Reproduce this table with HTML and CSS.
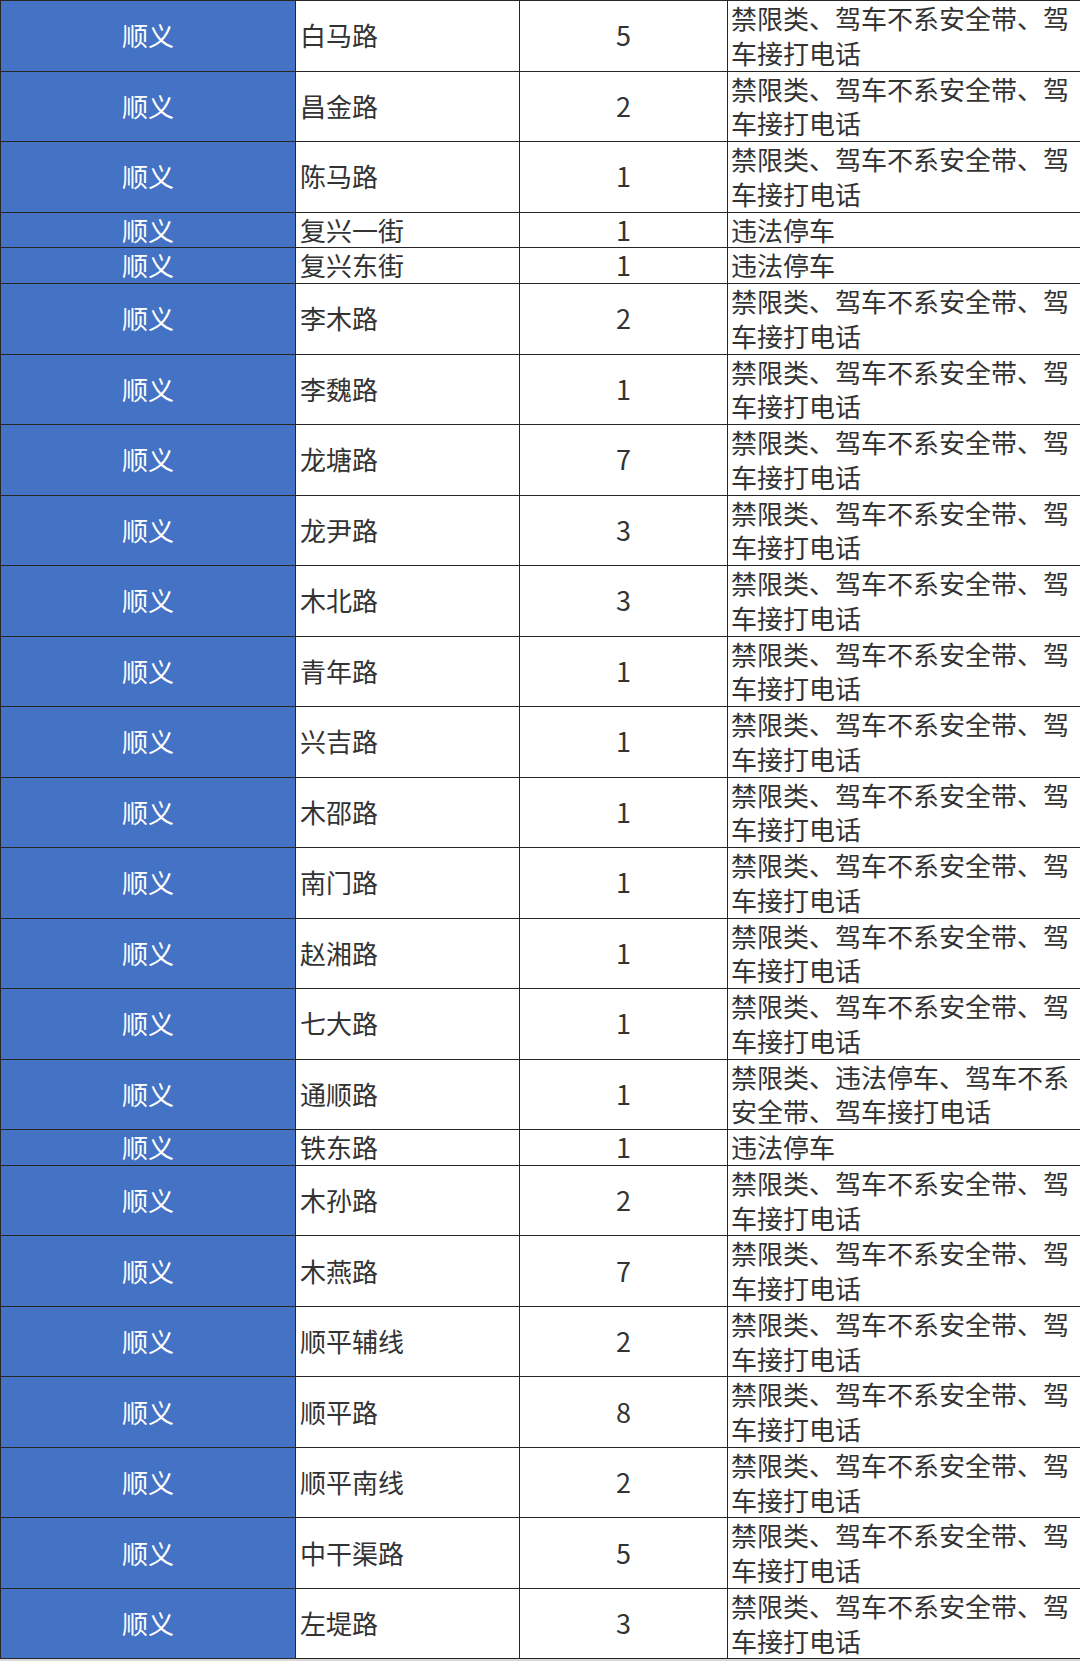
FILE: index.html
```html
<!DOCTYPE html>
<html lang="zh-CN">
<head>
<meta charset="utf-8">
<title>顺义 违法统计</title>
<link rel="stylesheet" href="styles.css">
</head>
<body>
<table class="sheet">
<colgroup>
<col class="c-area"><col class="c-road"><col class="c-num"><col class="c-type">
</colgroup>
<tbody>
<tr><td class="area">顺义</td><td class="road">白马路</td><td class="num">5</td><td class="type">禁限类、驾车不系安全带、驾车接打电话</td></tr>
<tr><td class="area">顺义</td><td class="road">昌金路</td><td class="num">2</td><td class="type">禁限类、驾车不系安全带、驾车接打电话</td></tr>
<tr><td class="area">顺义</td><td class="road">陈马路</td><td class="num">1</td><td class="type">禁限类、驾车不系安全带、驾车接打电话</td></tr>
<tr><td class="area">顺义</td><td class="road">复兴一街</td><td class="num">1</td><td class="type">违法停车</td></tr>
<tr><td class="area">顺义</td><td class="road">复兴东街</td><td class="num">1</td><td class="type">违法停车</td></tr>
<tr><td class="area">顺义</td><td class="road">李木路</td><td class="num">2</td><td class="type">禁限类、驾车不系安全带、驾车接打电话</td></tr>
<tr><td class="area">顺义</td><td class="road">李魏路</td><td class="num">1</td><td class="type">禁限类、驾车不系安全带、驾车接打电话</td></tr>
<tr><td class="area">顺义</td><td class="road">龙塘路</td><td class="num">7</td><td class="type">禁限类、驾车不系安全带、驾车接打电话</td></tr>
<tr><td class="area">顺义</td><td class="road">龙尹路</td><td class="num">3</td><td class="type">禁限类、驾车不系安全带、驾车接打电话</td></tr>
<tr><td class="area">顺义</td><td class="road">木北路</td><td class="num">3</td><td class="type">禁限类、驾车不系安全带、驾车接打电话</td></tr>
<tr><td class="area">顺义</td><td class="road">青年路</td><td class="num">1</td><td class="type">禁限类、驾车不系安全带、驾车接打电话</td></tr>
<tr><td class="area">顺义</td><td class="road">兴吉路</td><td class="num">1</td><td class="type">禁限类、驾车不系安全带、驾车接打电话</td></tr>
<tr><td class="area">顺义</td><td class="road">木邵路</td><td class="num">1</td><td class="type">禁限类、驾车不系安全带、驾车接打电话</td></tr>
<tr><td class="area">顺义</td><td class="road">南门路</td><td class="num">1</td><td class="type">禁限类、驾车不系安全带、驾车接打电话</td></tr>
<tr><td class="area">顺义</td><td class="road">赵湘路</td><td class="num">1</td><td class="type">禁限类、驾车不系安全带、驾车接打电话</td></tr>
<tr><td class="area">顺义</td><td class="road">七大路</td><td class="num">1</td><td class="type">禁限类、驾车不系安全带、驾车接打电话</td></tr>
<tr><td class="area">顺义</td><td class="road">通顺路</td><td class="num">1</td><td class="type">禁限类、违法停车、驾车不系安全带、驾车接打电话</td></tr>
<tr><td class="area">顺义</td><td class="road">铁东路</td><td class="num">1</td><td class="type">违法停车</td></tr>
<tr><td class="area">顺义</td><td class="road">木孙路</td><td class="num">2</td><td class="type">禁限类、驾车不系安全带、驾车接打电话</td></tr>
<tr><td class="area">顺义</td><td class="road">木燕路</td><td class="num">7</td><td class="type">禁限类、驾车不系安全带、驾车接打电话</td></tr>
<tr><td class="area">顺义</td><td class="road">顺平辅线</td><td class="num">2</td><td class="type">禁限类、驾车不系安全带、驾车接打电话</td></tr>
<tr><td class="area">顺义</td><td class="road">顺平路</td><td class="num">8</td><td class="type">禁限类、驾车不系安全带、驾车接打电话</td></tr>
<tr><td class="area">顺义</td><td class="road">顺平南线</td><td class="num">2</td><td class="type">禁限类、驾车不系安全带、驾车接打电话</td></tr>
<tr><td class="area">顺义</td><td class="road">中干渠路</td><td class="num">5</td><td class="type">禁限类、驾车不系安全带、驾车接打电话</td></tr>
<tr><td class="area">顺义</td><td class="road">左堤路</td><td class="num">3</td><td class="type">禁限类、驾车不系安全带、驾车接打电话</td></tr>
</tbody>
</table>
</body>
</html>
```

FILE: styles.css
```css
html, body {
  margin: 0;
  padding: 0;
  background: #ffffff;
}

body {
  font-family: "Noto Sans CJK SC", "Noto Sans", sans-serif;
  color: #333333;
  border-bottom: 2px solid #d9d9d9;
}

.sheet {
  width: 1080px;
  border-collapse: collapse;
  table-layout: fixed;
  font-size: 26px;
  line-height: 34.75px;
}

.c-area { width: 295px; }
.c-road { width: 224px; }
.c-num  { width: 208px; }
.c-type { width: 353px; }

.sheet td {
  border: 1px solid #262626;
  padding: 0;
  vertical-align: middle;
  white-space: normal;
}

.area {
  background: #4472c4;
  color: #ffffff;
  text-align: center;
}

.road {
  padding-left: 4px !important;
  text-align: left;
}

.num {
  text-align: center;
  font-size: 27px;
}

.type {
  padding-left: 3px !important;
  text-align: left;
  word-break: break-all;
}
```
